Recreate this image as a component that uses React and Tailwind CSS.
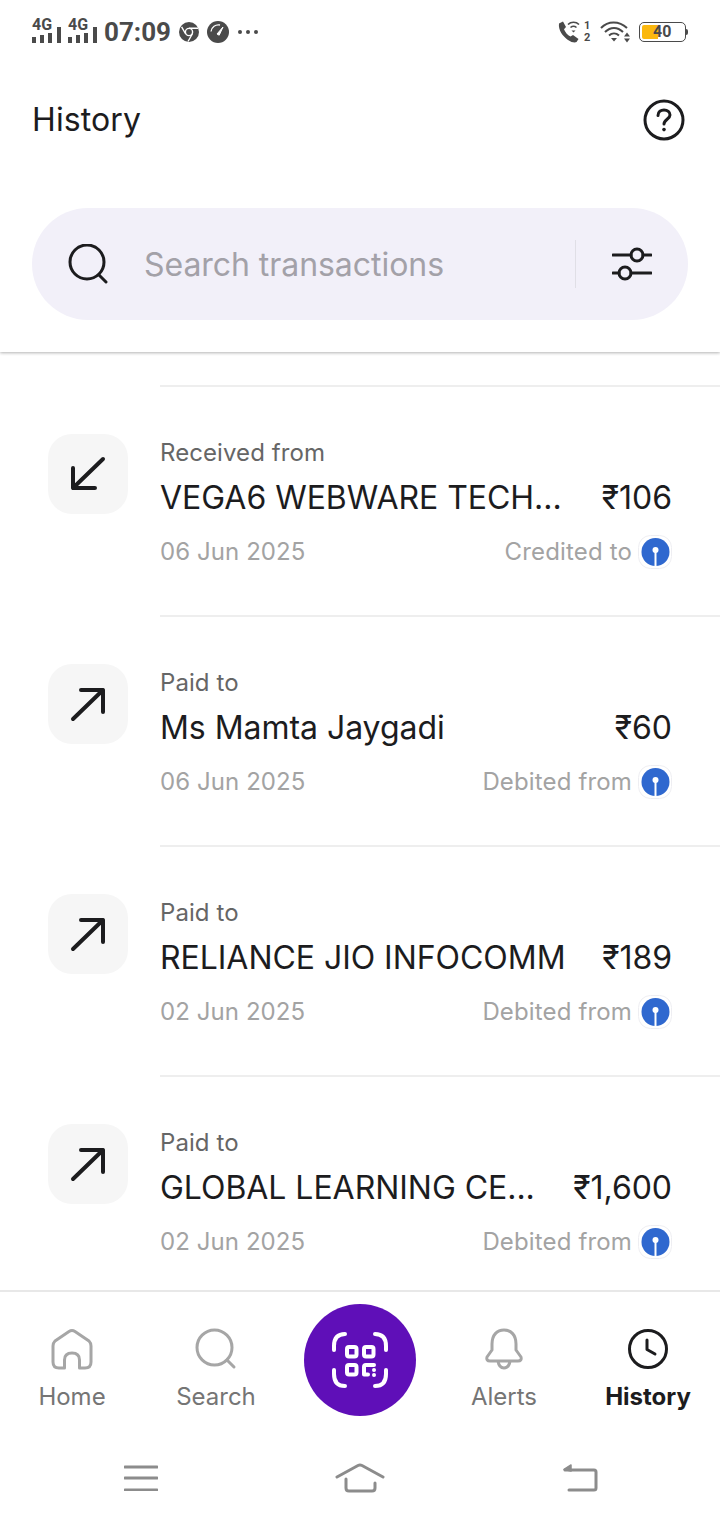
import React from 'react';

const inter = { fontFamily: 'Inter, sans-serif' };

const transactions = [
  { label: 'Received from', name: 'VEGA6 WEBWARE TECH...', amount: '₹106', date: '06 Jun 2025', bank: 'Credited to', incoming: true },
  { label: 'Paid to', name: 'Ms Mamta Jaygadi', amount: '₹60', date: '06 Jun 2025', bank: 'Debited from' },
  { label: 'Paid to', name: 'RELIANCE JIO INFOCOMM', amount: '₹189', date: '02 Jun 2025', bank: 'Debited from' },
  { label: 'Paid to', name: 'GLOBAL LEARNING CE...', amount: '₹1,600', date: '02 Jun 2025', bank: 'Debited from' },
];

const SignalIcon = () => (
  <div className="relative w-[29px] h-[26px]">
    <span className="absolute left-0 top-[-1px] text-[16px] leading-[14px] font-bold text-[#4a4a4a] font-['Roboto',sans-serif]">4G</span>
    <svg width="29" height="26" viewBox="0 0 29 26" fill="#4a4a4a">
      <rect x="0" y="18" width="4" height="6" />
      <rect x="8" y="16" width="4" height="8" />
      <rect x="16" y="14" width="4" height="10" />
      <rect x="25" y="8" width="4" height="16" />
    </svg>
  </div>
);

const ChromeIcon = () => (
  <svg width="20" height="20" viewBox="0 0 20 20">
    <circle cx="10" cy="10" r="10" fill="#4a4a4a" />
    <circle cx="10" cy="10" r="3.6" fill="#4a4a4a" stroke="#fff" strokeWidth="1.4" />
    <path d="M10 6.2H19M6.7 12L2.6 4.8M13.3 12L9 19.5" stroke="#fff" strokeWidth="1.4" fill="none" />
  </svg>
);

const GaugeIcon = () => (
  <svg width="22" height="22" viewBox="0 0 22 22">
    <circle cx="11" cy="11" r="11" fill="#4a4a4a" />
    <path d="M4 10.5A7.4 7.4 0 0 1 13 4" stroke="#fff" strokeWidth="1.3" fill="none" />
    <path d="M10 13L16 6L12.2 14.2Z" fill="#fff" stroke="#fff" strokeWidth="1" strokeLinejoin="round" />
  </svg>
);

const StatusRight = () => (
  <div className="flex items-center">
    <svg width="34" height="24" viewBox="0 0 34 24" fill="none">
      <path d="M1 3.5L5 1.5L8 7L6 9.2C7 12 9.5 15 12.5 16.5L15 15L20.5 19L18.5 22C17 23 13.5 22.5 10 20C5 16.5 0 10 1 3.5Z" fill="#4a4a4a" />
      <path d="M10 4.5C13 1.5 18 1.5 21 4.5M12.5 7.5C14.5 5.8 16.5 5.8 18.5 7.5" stroke="#4a4a4a" strokeWidth="1.6" />
      <path d="M13.5 10.5H17.5L15.5 12.5Z" fill="#4a4a4a" />
      <text x="26" y="9" fontSize="11" fontWeight="700" fill="#4a4a4a" fontFamily="Roboto, sans-serif">1</text>
      <text x="26" y="21" fontSize="11" fontWeight="700" fill="#4a4a4a" fontFamily="Roboto, sans-serif">2</text>
    </svg>
    <svg width="32" height="22" viewBox="0 0 32 22" fill="none" className="ml-[8px]">
      <path d="M1 7C8 -0.5 19 -0.5 27 7M5 11C10.5 5.5 17.5 5.5 23 11M9 14.5C12 11.8 16 11.8 19 14.5" stroke="#4a4a4a" strokeWidth="2" />
      <path d="M11 17H17L14 20.5Z" fill="#4a4a4a" />
      <path d="M27 11.5L30 15.5H24ZM24 17.5H30L27 21.5Z" fill="#4a4a4a" />
    </svg>
    <div className="relative ml-[7px] w-[47px] h-[20px] rounded-[5px] border border-[#4a4a4a] overflow-hidden bg-white">
      <div className="absolute left-[2px] top-[2px] bottom-[2px] w-[16px] rounded-l-[2px] bg-[#fbb80f]" />
      <span className="absolute left-[13px] top-0 text-[16px] leading-[18px] font-bold text-[#4a4a4a] font-['Roboto',sans-serif]">40</span>
    </div>
    <div className="w-[2px] h-[6px] bg-[#4a4a4a] rounded-r-sm" />
  </div>
);

const ArrowIcon = ({ incoming }) => (
  <div className="w-[80px] h-[80px] shrink-0 rounded-[24px] bg-[#f6f6f6]">
    <svg width="80" height="80" viewBox="0 0 80 80" fill="none" stroke="#1c1c1e" strokeWidth="4" strokeLinecap="round" strokeLinejoin="round">
      {incoming
        ? <path d="M55 25L25 54M25 34V54H47" />
        : <path d="M25 55L55 26M33 26H55V48" />}
    </svg>
  </div>
);

const BankIcon = () => (
  <svg width="34" height="34" viewBox="0 0 34 34">
    <rect x="0.5" y="0.5" width="33" height="33" rx="12" fill="#fff" stroke="#eeeef2" />
    <circle cx="17.5" cy="17" r="14" fill="#2f68cf" />
    <circle cx="17.5" cy="15" r="3" fill="#fff" />
    <rect x="16.5" y="15" width="2" height="17" fill="#fff" />
  </svg>
);

const TransactionRow = ({ tx }) => (
  <div className="h-[230px]">
    <div className="ml-[160px] h-[2px] bg-[#eeeeee]" />
    <div className="flex pl-[48px] pr-[48px] pt-[47px]">
      <ArrowIcon incoming={tx.incoming} />
      <div className="flex-1 ml-[32px] min-w-0 pt-[3px]">
        <div className="text-[24px] leading-[32px] tracking-[0.08px] text-[#666666]">{tx.label}</div>
        <div className="flex justify-between mt-[9px] text-[32px] leading-[40px] tracking-[-0.04px] text-[#1c1c1e]">
          <span className="whitespace-nowrap">{tx.name}</span>
          <span>{tx.amount}</span>
        </div>
        <div className="flex justify-between items-center mt-[17px] text-[24px] leading-[34px] text-[#a3a3a3]">
          <span className="tracking-[0.08px]">{tx.date}</span>
          <span className="flex items-center gap-[6px] tracking-[0.15px]">{tx.bank}<BankIcon /></span>
        </div>
      </div>
    </div>
  </div>
);

const NavItem = ({ label, active, children }) => (
  <div className="w-[144px] flex flex-col items-center pt-[36px]">
    <div className="h-[42px] flex items-center justify-center">{children}</div>
    <span className={active ? 'mt-[11px] text-[24px] leading-[32px] font-bold text-[#1c1c1e]' : 'mt-[11px] text-[24px] leading-[32px] text-[#757575]'}>{label}</span>
  </div>
);

const ScanIcon = () => (
  <svg width="56" height="56" viewBox="0 0 56 56" fill="none" stroke="#fff" strokeWidth="4" strokeLinecap="round" strokeLinejoin="round">
    <path d="M2 18V14Q2 2 13 2M54 18V14Q54 2 43 2M2 38V42Q2 54 13 54M54 38V42Q54 54 43 54" />
    <rect x="15" y="15" width="9.5" height="9.5" rx="2" />
    <rect x="32" y="15" width="9.5" height="9.5" rx="2" />
    <rect x="15" y="33" width="9.5" height="9.5" rx="2" />
    <path d="M42 33H34Q32 33 32 35V42.5H36" />
    <path d="M42 38V38.1M42 43V43.1" />
  </svg>
);

export default function App() {
  return (
    <div className="w-[720px] h-[1520px] bg-white flex flex-col overflow-hidden" style={inter}>
      <div className="relative z-10 bg-white shadow-[0_1px_3px_rgba(0,0,0,0.3)] h-[352px] shrink-0">
        <div className="h-[64px] px-[32px] flex items-center justify-between">
          <div className="flex items-center">
            <SignalIcon />
            <div className="ml-[7px]"><SignalIcon /></div>
            <span className="ml-[7px] text-[26px] font-bold text-[#4a4a4a] font-['Roboto',sans-serif]">07:09</span>
            <div className="ml-[8px]"><ChromeIcon /></div>
            <div className="ml-[8px]"><GaugeIcon /></div>
            <span className="ml-[9px] flex gap-[4px]">
              <i className="w-[4px] h-[4px] rounded-full bg-[#4a4a4a]" />
              <i className="w-[4px] h-[4px] rounded-full bg-[#4a4a4a]" />
              <i className="w-[4px] h-[4px] rounded-full bg-[#4a4a4a]" />
            </span>
          </div>
          <StatusRight />
        </div>
        <div className="h-[112px] pl-[32px] pr-[34px] flex items-center justify-between">
          <span className="text-[32px] tracking-[0.1px] text-[#1c1c1e]">History</span>
          <svg width="44" height="44" viewBox="0 0 44 44" fill="none" stroke="#1c1c1e" strokeWidth="3" strokeLinecap="round">
            <circle cx="22" cy="22" r="19" />
            <path d="M16 17.5C16 13.5 19 12 22 12C25.5 12 28 14 28 17C28 21 22 21.5 22 26" />
            <path d="M22 31.5V31.6" strokeWidth="3.6" />
          </svg>
        </div>
        <div className="mt-[32px] mx-[32px] h-[112px] rounded-[56px] bg-[#f2f0f9] flex items-center pl-[36px] pr-[36px]">
          <svg width="40" height="40" viewBox="0 0 40 40" fill="none" stroke="#1c1c1e" strokeWidth="3" strokeLinecap="round">
            <circle cx="19" cy="18" r="17" />
            <path d="M31 31L38 38" />
          </svg>
          <span className="ml-[36px] flex-1 pt-[2px] text-[32px] tracking-[-0.05px] text-[#a3a1a8]">Search transactions</span>
          <div className="w-[1px] h-[48px] bg-[#e0dfe6]" />
          <svg width="40" height="34" viewBox="0 0 40 34" fill="none" stroke="#1c1c1e" strokeWidth="3" strokeLinecap="round" className="ml-[36px]">
            <path d="M1 8H19M31 8H39M1 26H7M19 26H39" />
            <circle cx="25" cy="8" r="6" />
            <circle cx="13" cy="26" r="6" />
          </svg>
        </div>
      </div>

      <div className="flex-1 min-h-0 overflow-hidden pt-[33px]">
        {transactions.map((tx) => (
          <TransactionRow key={tx.name} tx={tx} />
        ))}
      </div>

      <div className="relative h-[150px] shrink-0 bg-white border-t-2 border-[#e8e8e8] flex">
        <NavItem label="Home">
          <svg width="42" height="42" viewBox="0 0 42 42" fill="none" stroke="#a6a6a6" strokeWidth="3" strokeLinejoin="round">
            <path d="M2 18Q2 15 4 13L18 3.5Q21 1.5 24 3.5L38 13Q40 15 40 18V34Q40 40 34 40H28.5V32Q28.5 25 21 25Q13.5 25 13.5 32V40H8Q2 40 2 34Z" />
          </svg>
        </NavItem>
        <NavItem label="Search">
          <svg width="42" height="42" viewBox="0 0 42 42" fill="none" stroke="#a6a6a6" strokeWidth="3" strokeLinecap="round">
            <circle cx="19.5" cy="19.5" r="17.5" />
            <path d="M32 32L39 39" />
          </svg>
        </NavItem>
        <div className="w-[144px] flex justify-center pt-[12px]">
          <div className="w-[112px] h-[112px] rounded-full bg-[#5f0fb8] flex items-center justify-center">
            <ScanIcon />
          </div>
        </div>
        <NavItem label="Alerts">
          <svg width="38" height="42" viewBox="0 0 38 42" fill="none" stroke="#a6a6a6" strokeWidth="3" strokeLinejoin="round">
            <path d="M7 16C7 7 12 2 19 2C26 2 31 7 31 16V22L36 29Q37 33 33 33H5Q1 33 2 29L7 22Z" />
            <path d="M13 33Q14 40 19 40Q24 40 25 33" />
          </svg>
        </NavItem>
        <NavItem label="History" active>
          <svg width="40" height="40" viewBox="0 0 40 40" fill="none" stroke="#1c1c1e" strokeWidth="3" strokeLinecap="round" strokeLinejoin="round">
            <circle cx="20" cy="20" r="18.5" />
            <path d="M19 11V20.5L27 25" />
          </svg>
        </NavItem>
      </div>

      <div className="h-[80px] shrink-0 bg-white flex pb-[4px]">
        <div className="w-[281px] flex justify-center items-center">
          <svg width="34" height="26" viewBox="0 0 34 26" fill="none" stroke="#8c8c8c" strokeWidth="3" strokeLinecap="round">
            <path d="M1 2H33M1 13H33M1 25H33" />
          </svg>
        </div>
        <div className="w-[158px] flex justify-center items-center">
          <svg width="50" height="30" viewBox="0 0 50 30" fill="none" stroke="#8c8c8c" strokeWidth="3" strokeLinecap="round" strokeLinejoin="round">
            <path d="M2 14L23 2.5Q25 1.5 27 2.5L48 14" />
            <path d="M11 16V25Q11 28 14 28H37Q40 28 40 25V20" />
          </svg>
        </div>
        <div className="w-[281px] flex justify-center items-center">
          <svg width="36" height="28" viewBox="0 0 36 28" fill="none" stroke="#8c8c8c" strokeWidth="3" strokeLinecap="round" strokeLinejoin="round">
            <path d="M3 6H32Q34 6 34 8V24Q34 26 32 26H7" />
            <path d="M9 1L2 5.5L9 7Z" fill="#8c8c8c" strokeWidth="1.5" />
          </svg>
        </div>
      </div>
    </div>
  );
}
